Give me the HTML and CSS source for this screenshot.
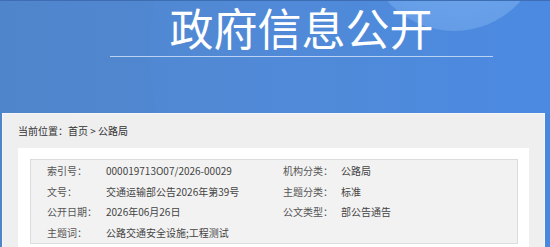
FILE: index.html
```html
<!DOCTYPE html>
<html lang="zh-CN">
<head>
<meta charset="utf-8">
<title>政府信息公开</title>
<link rel="stylesheet" href="styles.css">
</head>
<body>
<div class="page">
  <header class="banner">
    <div class="deco-arc"></div>
    <div class="deco-glow"></div>
    <div class="title-wrap">
      <h1 class="title">政府信息公开</h1>
    </div>
  </header>
  <main class="panel">
    <div class="crumb">当前位置：首页 &gt; 公路局</div>
    <div class="card">
      <div class="meta">
        <div class="lbl">索引号：</div><div class="val">000019713O07/2026-00029</div>
        <div class="lbl">机构分类：</div><div class="val">公路局</div>
        <div class="lbl">文号：</div><div class="val">交通运输部公告2026年第39号</div>
        <div class="lbl">主题分类：</div><div class="val">标准</div>
        <div class="lbl">公开日期：</div><div class="val">2026年06月26日</div>
        <div class="lbl">公文类型：</div><div class="val">部公告通告</div>
        <div class="lbl">主题词：</div><div class="val">公路交通安全设施;工程测试</div>
        <div class="lbl"></div><div class="val"></div>
      </div>
    </div>
  </main>
</div>
</body>
</html>
```

FILE: styles.css
```css
* { box-sizing: border-box; margin: 0; padding: 0; }
html, body { height: 100%; }
body {
  font-family: "Noto Sans CJK SC", "Noto Sans", sans-serif;
  background: linear-gradient(90deg, #4f85cb 0%, #5088d2 40%, #4d89da 75%, #4a88e0 100%);
  border-top: 1px solid #3d6db2;
  overflow: hidden;
}
.page { position: relative; height: 246px; overflow: hidden; }
.banner {
  position: relative;
  height: 112px;
  overflow: hidden;
}
.deco-glow {
  position: absolute;
  left: 365px;
  top: -148px;
  width: 178px;
  height: 178px;
  border-radius: 50%;
  background: radial-gradient(circle at 55% 40%, #80b2ef 0%, #6ea5eb 55%, #619ae5 100%);
  opacity: 0.85;
}
.deco-arc {
  position: absolute;
  left: 150px;
  top: -300px;
  width: 700px;
  height: 700px;
  border-radius: 50%;
  background: rgba(90, 150, 235, 0.12);
}
.title-wrap {
  position: relative;
  margin-left: 110px;
  width: 383px;
  padding-bottom: 3px;
  border-bottom: 1px solid #b9d2f3;
}
.title {
  font-size: 44px;
  font-weight: 400;
  line-height: 52px;
  color: #ffffff;
  text-align: center;
}
.panel {
  position: relative;
  margin-left: 2px;
  width: 543px;
  background: #efefef;
  border: 1px solid #f6f6f6;
  border-bottom: none;
  height: 134px;
  overflow: hidden;
}
.crumb {
  height: 34px;
  padding-left: 15px;
  padding-top: 10px;
  font-size: 10px;
  line-height: 14px;
  color: #333333;
}
.card {
  margin: 0 15px 0 15px;
  background: #ffffff;
  padding: 11px 11px 0 12px;
  height: 100px;
}
.meta {
  display: grid;
  grid-template-columns: 59px 177px 58px 1fr;
  grid-auto-rows: 20.5px;
  padding: 1px 0 0 16px;
  background: #f2f2f2;
  border: 1px solid #dcdcdc;
  font-size: 10px;
  line-height: 20.5px;
}
.lbl { color: #555555; white-space: nowrap; }
.val { color: #444444; white-space: nowrap; }
```
